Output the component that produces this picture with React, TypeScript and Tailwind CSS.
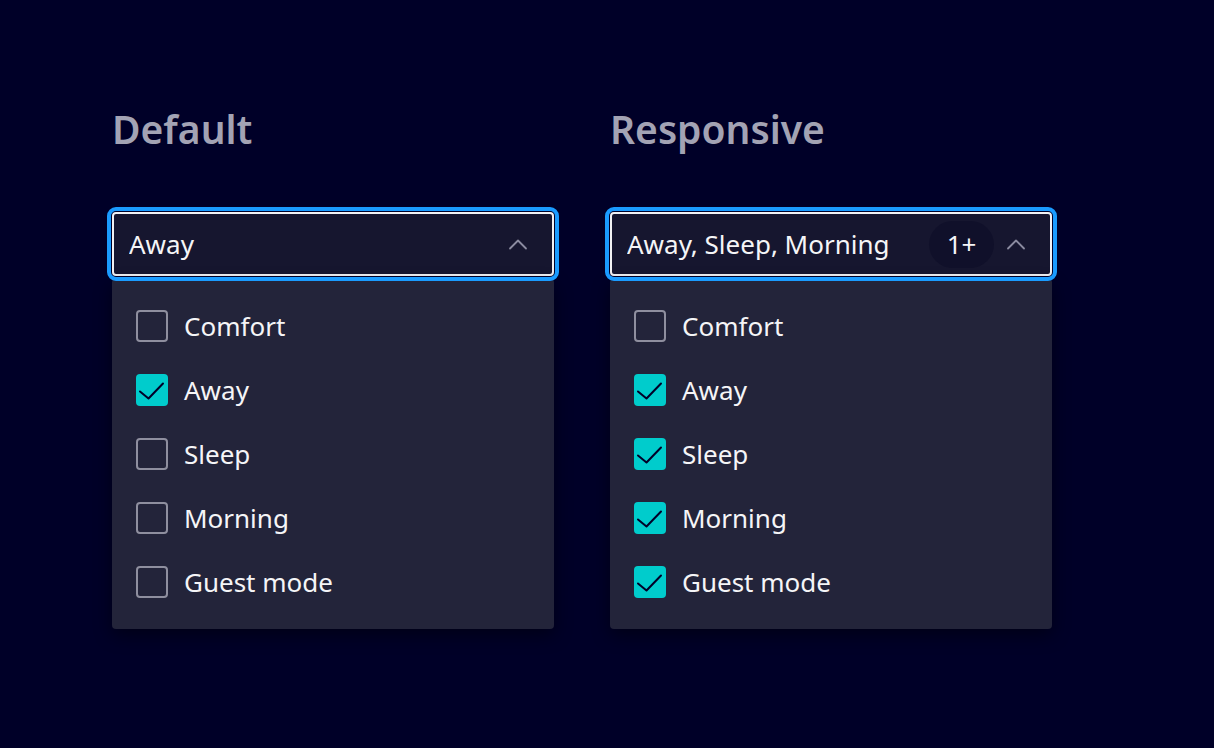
import React from "react";

type Option = { label: string; checked: boolean };

const font = { fontFamily: '"Noto Sans", "Open Sans", sans-serif' };

function Chevron() {
  return (
    <svg viewBox="0 0 24 24" className="h-6 w-6 shrink-0" fill="none">
      <path d="M4 16.5 L12 8.5 L20 16.5" stroke="#8b8ba0" strokeWidth="1.8" strokeLinecap="round" strokeLinejoin="round" />
    </svg>
  );
}

function Checkbox({ checked }: { checked: boolean }) {
  if (checked) {
    return (
      <span className="flex h-8 w-8 shrink-0 items-center justify-center rounded-[4px] bg-[#00cccc]">
        <svg viewBox="0 0 32 32" className="h-8 w-8" fill="none">
          <path d="M4 17.5 L12.5 24.5 L27 9.5" stroke="#000028" strokeWidth="2" strokeLinecap="round" strokeLinejoin="round" />
        </svg>
      </span>
    );
  }
  return <span className="h-8 w-8 shrink-0 rounded-[4px] border-2 border-[#8f8f9f]" />;
}

function Select({ title, value, options, more }: { title: string; value: string; options: Option[]; more?: string }) {
  return (
    <div className="w-[442px]">
      <h2 className="text-[39px] font-semibold leading-none text-[#a3a3b4]">{title}</h2>

      {/* トリガー */}
      <div className="mt-16 flex h-16 items-center rounded-[4px] border-2 border-[#f2f2f4] bg-[#16162f] pl-[15px] pr-[22px] outline-[length:4px] outline-offset-[1px] outline-solid outline-[#1a9bff]">
        <span className="flex-1 truncate text-[26px] text-[#f5f5f7]">{value}</span>
        {more && (
          <span className="mr-[10px] flex h-[47px] w-[65px] items-center justify-center rounded-full bg-[#10102a] text-[26px] text-[#f5f5f7]">
            {more}
          </span>
        )}
        <Chevron />
      </div>

      {/* メニュー */}
      <div className="mt-1 rounded-b-[4px] rounded-t-[2px] bg-[#23243a] pt-[14px] pb-[15px] shadow-[0_6px_18px_rgba(0,0,0,0.45)]">
        {options.map((o) => (
          <div key={o.label} className="flex h-16 items-center gap-4 px-6">
            <Checkbox checked={o.checked} />
            <span className="text-[26px] text-[#f5f5f7]">{o.label}</span>
          </div>
        ))}
      </div>
    </div>
  );
}

export default function App() {
  const labels = ["Comfort", "Away", "Sleep", "Morning", "Guest mode"];
  const defaultOpts = labels.map((l) => ({ label: l, checked: l === "Away" }));
  const responsiveOpts = labels.map((l) => ({ label: l, checked: l !== "Comfort" }));

  return (
    <div className="h-[748px] w-[1214px] overflow-hidden bg-[#000028] pl-[112px] pt-[109px]" style={font}>
      <div className="flex gap-14">
        <Select title="Default" value="Away" options={defaultOpts} />
        <Select title="Responsive" value="Away, Sleep, Morning" options={responsiveOpts} more="1+" />
      </div>
    </div>
  );
}
